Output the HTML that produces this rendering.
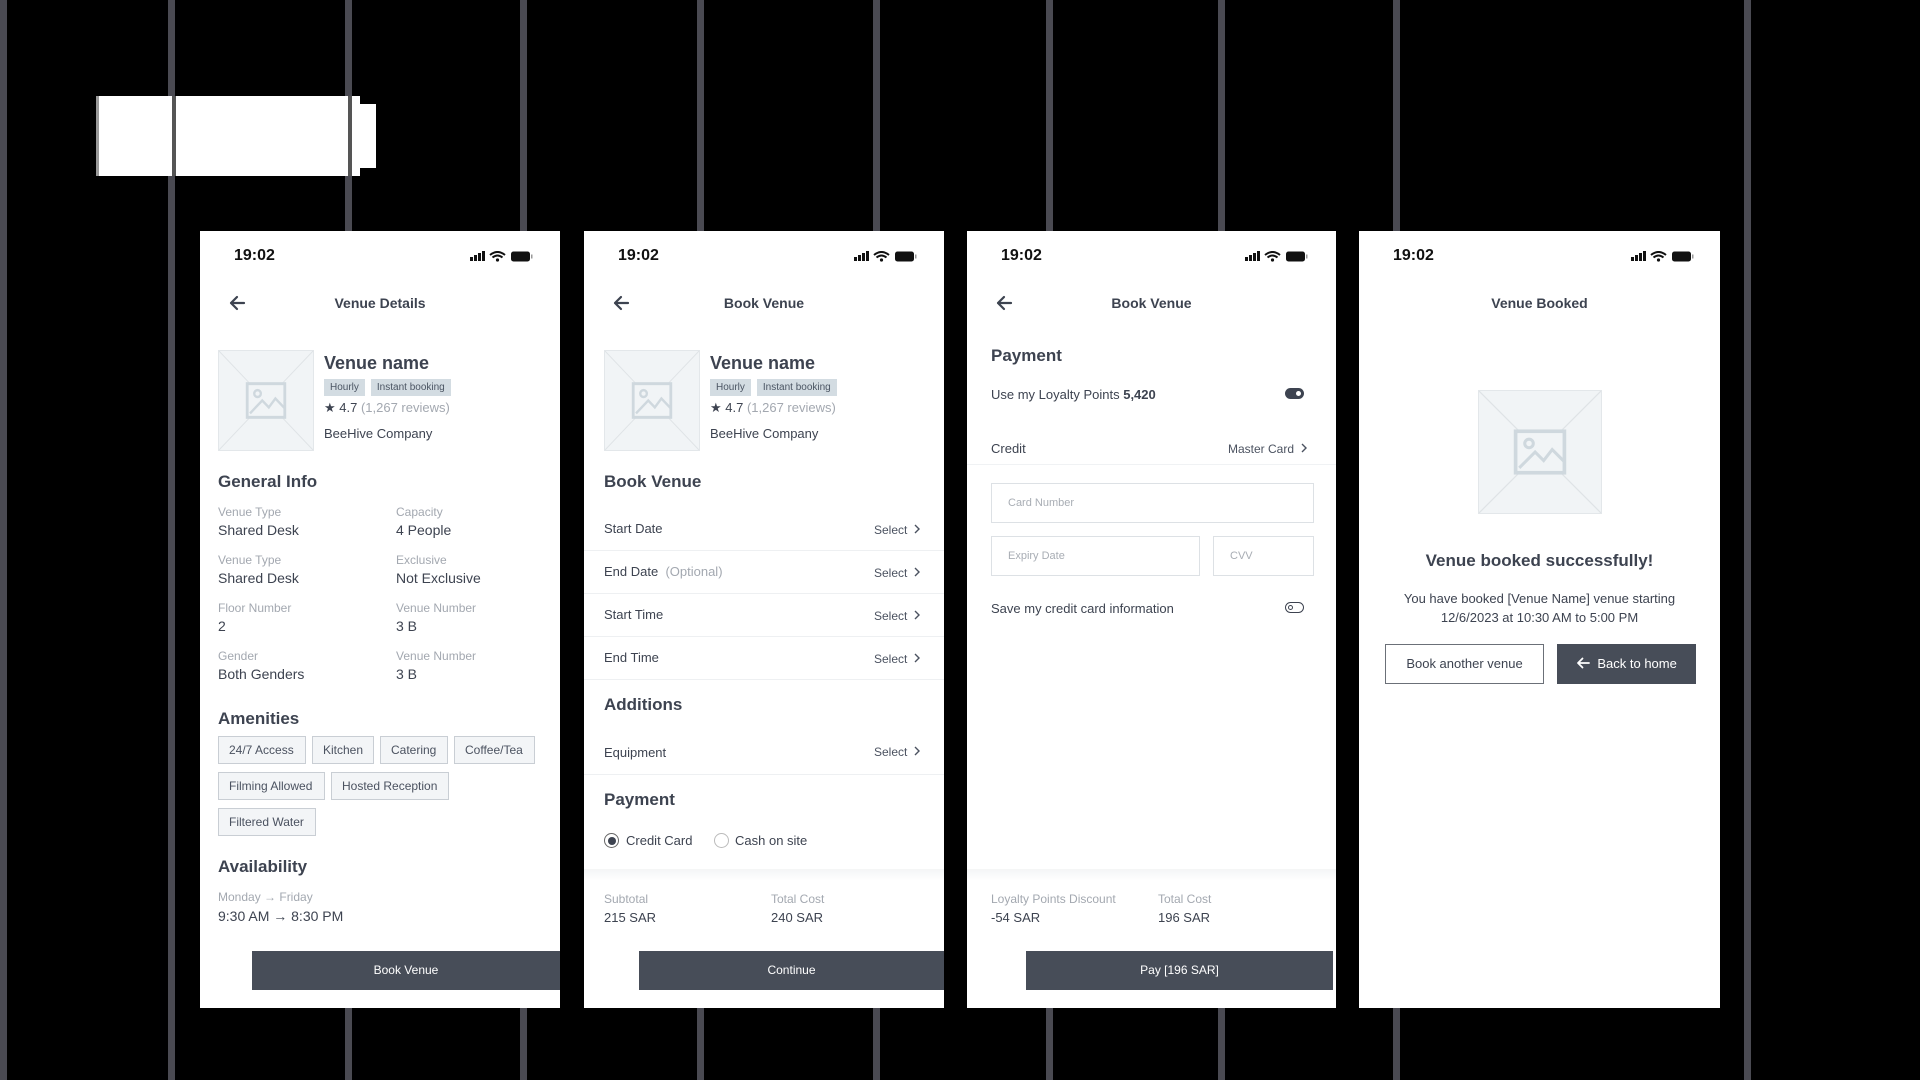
<!DOCTYPE html>
<html><head><meta charset="utf-8"><style>
*{margin:0;padding:0;box-sizing:border-box}
body{width:1920px;height:1080px;background:#000;position:relative;overflow:hidden;font-family:"Liberation Sans",sans-serif;color:#3d4350}
.vl{position:absolute;top:0;width:7px;height:1080px;background:#4a4a52}
.ph{position:absolute;top:231px;height:777px;background:#fff;overflow:hidden}
.a{position:absolute;white-space:nowrap}
.time{font-size:16px;font-weight:bold;color:#111;left:34px;top:16px}
.title{font-size:14px;font-weight:bold;top:64px;left:0;right:0;text-align:center;color:#3d4350}
.back{left:28px;top:63px}
.img{position:absolute;background:#f1f4f6;border:1px solid #e3e7ea}
.vn{font-size:18px;font-weight:bold}
.tag{font-size:10px;background:#d3dce2;color:#4b5563;padding:3px 6px;display:inline-block;margin-right:6px}
.h{font-size:17px;font-weight:bold;color:#3d4350}
.lb{font-size:12px;color:#a3a8b0}
.v{font-size:14px;color:#3d4350}
.chip{position:absolute;font-size:12px;border:1px solid #c9ced4;background:#f3f5f7;height:28px;line-height:26px;padding:0 10px;color:#4b5260}
.row{position:absolute;left:0;right:0;height:43px;border-bottom:1px solid #eef0f2}
.sel{font-size:12px;color:#4b5260}
.btn{position:absolute;background:#474d58;color:#fff;font-size:12px;text-align:center;line-height:39px;height:39px}
.foot{position:absolute;left:0;right:0;height:12px;background:linear-gradient(#f4f5f6,#fff)}
.inp{position:absolute;border:1px solid #dde1e5;font-size:11px;color:#a8adb4;padding-left:16px;line-height:38px;height:40px}
</style></head><body>
<div class="vl" style="left:0"></div>
<div class="vl" style="left:168px"></div>
<div class="vl" style="left:345px"></div>
<div class="vl" style="left:520px"></div>
<div class="vl" style="left:697px"></div>
<div class="vl" style="left:873px"></div>
<div class="vl" style="left:1046px"></div>
<div class="vl" style="left:1218px"></div>
<div class="vl" style="left:1393px"></div>
<div class="vl" style="left:1744px"></div>
<div style="position:absolute;left:96px;top:96px;width:264px;height:80px;background:#fff;border-left:3px solid #999"></div>
<div style="position:absolute;left:350px;top:104px;width:26px;height:64px;background:#fff"></div>
<div class="vl" style="left:172px;top:96px;height:80px;width:4px;background:#555"></div>
<div class="vl" style="left:348px;top:96px;height:80px;width:4px;background:#555"></div>

<svg width="0" height="0" style="position:absolute"><defs>
<g id="st"><rect x="0" y="6" width="3" height="4" fill="#111"/><rect x="4" y="4" width="3" height="6" fill="#111"/><rect x="8" y="2" width="3" height="8" fill="#111"/><rect x="12" y="0" width="3" height="10" fill="#111"/>
<path d="M20 4 Q27.5 -2 35 4 M22.5 6.5 Q27.5 2.5 32.5 6.5" stroke="#111" stroke-width="2" fill="none"/><circle cx="27.5" cy="9" r="1.6" fill="#111"/>
<rect x="41" y="0.5" width="19" height="10" rx="2.5" fill="#111"/><rect x="61" y="3.5" width="1.5" height="4" fill="#999"/></g>
<g id="ar"><path d="M16 9H3M9 3L3 9l6 6" stroke="#3d4350" stroke-width="2.2" fill="none" stroke-linecap="round" stroke-linejoin="round"/></g>
<g id="ph"><line x1="0" y1="0" x2="100" y2="100" stroke="#dfe3e6" stroke-width="1"/><line x1="100" y1="0" x2="0" y2="100" stroke="#dfe3e6" stroke-width="1"/><rect x="30" y="33" width="40" height="34" fill="#f1f4f6" stroke="#cfd8de" stroke-width="3"/><circle cx="41" cy="43" r="3.5" fill="none" stroke="#cfd8de" stroke-width="2.5"/><path d="M33 63l13-13 7 7 7-9 10 10" fill="none" stroke="#cfd8de" stroke-width="2.5"/></g>
<g id="chev"><path d="M1 1l4 4-4 4" stroke="#4b5260" stroke-width="1.4" fill="none"/></g>
</defs></svg>

<!-- PHONE 1 -->
<div class="ph" style="left:200px;width:360px">
<div class="a time">19:02</div>
<svg class="a" style="left:270px;top:20px" width="64" height="12"><use href="#st"/></svg>
<svg class="a back" width="20" height="18"><use href="#ar"/></svg>
<div class="a title">Venue Details</div>
<div class="img" style="left:18px;top:119px;width:96px;height:101px"><svg width="94" height="99" viewBox="0 0 100 100" preserveAspectRatio="none"><use href="#ph"/></svg></div>
<div class="a vn" style="left:124px;top:122px">Venue name</div>
<div class="a" style="left:124px;top:146px"><span class="tag">Hourly</span><span class="tag">Instant booking</span></div>
<div class="a" style="left:124px;top:169px;font-size:13px">★ 4.7 <span style="color:#a3a8b0">(1,267 reviews)</span></div>
<div class="a v" style="left:124px;top:195px;font-size:13px">BeeHive Company</div>
<div class="a h" style="left:18px;top:241px">General Info</div>
<div class="a lb" style="left:18px;top:274px">Venue Type</div><div class="a v" style="left:18px;top:291px">Shared Desk</div>
<div class="a lb" style="left:196px;top:274px">Capacity</div><div class="a v" style="left:196px;top:291px">4 People</div>
<div class="a lb" style="left:18px;top:322px">Venue Type</div><div class="a v" style="left:18px;top:339px">Shared Desk</div>
<div class="a lb" style="left:196px;top:322px">Exclusive</div><div class="a v" style="left:196px;top:339px">Not Exclusive</div>
<div class="a lb" style="left:18px;top:370px">Floor Number</div><div class="a v" style="left:18px;top:387px">2</div>
<div class="a lb" style="left:196px;top:370px">Venue Number</div><div class="a v" style="left:196px;top:387px">3 B</div>
<div class="a lb" style="left:18px;top:418px">Gender</div><div class="a v" style="left:18px;top:435px">Both Genders</div>
<div class="a lb" style="left:196px;top:418px">Venue Number</div><div class="a v" style="left:196px;top:435px">3 B</div>
<div class="a h" style="left:18px;top:478px">Amenities</div>
<div class="chip" style="left:18px;top:505px;width:88px">24/7 Access</div>
<div class="chip" style="left:112px;top:505px;width:62px">Kitchen</div>
<div class="chip" style="left:180px;top:505px;width:68px">Catering</div>
<div class="chip" style="left:254px;top:505px;width:81px">Coffee/Tea</div>
<div class="chip" style="left:18px;top:541px;width:107px">Filming Allowed</div>
<div class="chip" style="left:131px;top:541px;width:118px">Hosted Reception</div>
<div class="chip" style="left:18px;top:577px;width:98px">Filtered Water</div>
<div class="a h" style="left:18px;top:626px">Availability</div>
<div class="a lb" style="left:18px;top:659px">Monday → Friday</div>
<div class="a v" style="left:18px;top:677px">9:30 AM → 8:30 PM</div>
<div class="btn" style="left:52px;top:720px;width:308px">Book Venue</div>
</div>

<!-- PHONE 2 -->
<div class="ph" style="left:584px;width:360px">
<div class="a time">19:02</div>
<svg class="a" style="left:270px;top:20px" width="64" height="12"><use href="#st"/></svg>
<svg class="a back" width="20" height="18"><use href="#ar"/></svg>
<div class="a title">Book Venue</div>
<div class="img" style="left:20px;top:119px;width:96px;height:101px"><svg width="94" height="99" viewBox="0 0 100 100" preserveAspectRatio="none"><use href="#ph"/></svg></div>
<div class="a vn" style="left:126px;top:122px">Venue name</div>
<div class="a" style="left:126px;top:146px"><span class="tag">Hourly</span><span class="tag">Instant booking</span></div>
<div class="a" style="left:126px;top:169px;font-size:13px">★ 4.7 <span style="color:#a3a8b0">(1,267 reviews)</span></div>
<div class="a v" style="left:126px;top:195px;font-size:13px">BeeHive Company</div>
<div class="a h" style="left:20px;top:241px">Book Venue</div>
<div class="row" style="top:277px"></div><div class="row" style="top:320px"></div><div class="row" style="top:363px"></div><div class="row" style="top:406px"></div><div class="row" style="top:501px"></div>
<div class="a v" style="left:20px;top:290px;font-size:13px">Start Date</div>
<div class="a v" style="left:20px;top:333px;font-size:13px">End Date <span style="color:#a3a8b0">&nbsp;(Optional)</span></div>
<div class="a v" style="left:20px;top:376px;font-size:13px">Start Time</div>
<div class="a v" style="left:20px;top:419px;font-size:13px">End Time</div>
<div class="a h" style="left:20px;top:464px">Additions</div>
<div class="a v" style="left:20px;top:514px;font-size:13px">Equipment</div>
<div class="a sel" style="left:290px;top:292px">Select &nbsp;<svg width="6" height="10"><use href="#chev"/></svg></div>
<div class="a sel" style="left:290px;top:335px">Select &nbsp;<svg width="6" height="10"><use href="#chev"/></svg></div>
<div class="a sel" style="left:290px;top:378px">Select &nbsp;<svg width="6" height="10"><use href="#chev"/></svg></div>
<div class="a sel" style="left:290px;top:421px">Select &nbsp;<svg width="6" height="10"><use href="#chev"/></svg></div>
<div class="a sel" style="left:290px;top:514px">Select &nbsp;<svg width="6" height="10"><use href="#chev"/></svg></div>
<div class="a h" style="left:20px;top:559px">Payment</div>
<div class="a" style="left:20px;top:602px;width:15px;height:15px;border:1px solid #666;border-radius:50%"><div style="margin:2.5px;width:8px;height:8px;border-radius:50%;background:#3d4350"></div></div>
<div class="a v" style="left:42px;top:602px;font-size:13px">Credit Card</div>
<div class="a" style="left:130px;top:602px;width:15px;height:15px;border:1px solid #bbb;border-radius:50%"></div>
<div class="a v" style="left:151px;top:602px;font-size:13px">Cash on site</div>
<div class="foot" style="top:638px"></div>
<div class="a lb" style="left:20px;top:661px">Subtotal</div><div class="a v" style="left:20px;top:679px;font-size:13px">215 SAR</div>
<div class="a lb" style="left:187px;top:661px">Total Cost</div><div class="a v" style="left:187px;top:679px;font-size:13px">240 SAR</div>
<div class="btn" style="left:55px;top:720px;width:305px">Continue</div>
</div>

<!-- PHONE 3 -->
<div class="ph" style="left:967px;width:369px">
<div class="a time">19:02</div>
<svg class="a" style="left:278px;top:20px" width="64" height="12"><use href="#st"/></svg>
<svg class="a back" width="20" height="18"><use href="#ar"/></svg>
<div class="a title">Book Venue</div>
<div class="a h" style="left:24px;top:115px">Payment</div>
<div class="a v" style="left:24px;top:156px;font-size:13px">Use my Loyalty Points <b>5,420</b></div>
<div class="a" style="left:318px;top:157px;width:19px;height:11px;border-radius:6px;background:#3d4350"><div style="position:absolute;right:3px;top:3px;width:5px;height:5px;border-radius:50%;background:#fff"></div></div>
<div class="a v" style="left:24px;top:210px;font-size:13px">Credit</div>
<div class="a sel" style="left:261px;top:211px">Master Card &nbsp;<svg width="6" height="10"><use href="#chev"/></svg></div>
<div class="a" style="left:0;right:0;top:233px;height:1px;background:#f0f2f4"></div>
<div class="inp" style="left:24px;top:252px;width:323px">Card Number</div>
<div class="inp" style="left:24px;top:305px;width:209px">Expiry Date</div>
<div class="inp" style="left:246px;top:305px;width:101px">CVV</div>
<div class="a v" style="left:24px;top:370px;font-size:13px">Save my credit card information</div>
<div class="a" style="left:318px;top:371px;width:19px;height:11px;border-radius:6px;border:1.5px solid #3d4350"><div style="position:absolute;left:2px;top:1.5px;width:5px;height:5px;border-radius:50%;border:1.3px solid #3d4350"></div></div>
<div class="foot" style="top:638px"></div>
<div class="a lb" style="left:24px;top:661px">Loyalty Points Discount</div><div class="a v" style="left:24px;top:679px;font-size:13px">-54 SAR</div>
<div class="a lb" style="left:191px;top:661px">Total Cost</div><div class="a v" style="left:191px;top:679px;font-size:13px">196 SAR</div>
<div class="btn" style="left:59px;top:720px;width:307px">Pay [196 SAR]</div>
</div>

<!-- PHONE 4 -->
<div class="ph" style="left:1359px;width:361px">
<div class="a time">19:02</div>
<svg class="a" style="left:272px;top:20px" width="64" height="12"><use href="#st"/></svg>
<div class="a title">Venue Booked</div>
<div class="img" style="left:119px;top:159px;width:124px;height:124px"><svg width="122" height="122" viewBox="0 0 100 100"><use href="#ph"/></svg></div>
<div class="a h" style="left:0;right:0;text-align:center;top:320px">Venue booked successfully!</div>
<div class="a v" style="left:0;right:0;text-align:center;top:358px;font-size:13px;line-height:19px;white-space:normal">You have booked [Venue Name] venue starting<br>12/6/2023 at 10:30 AM to 5:00 PM</div>
<div class="a" style="left:26px;top:413px;width:159px;height:40px;border:1px solid #6b7078;font-size:13px;text-align:center;line-height:38px">Book another venue</div>
<div class="btn" style="left:198px;top:413px;width:139px;height:40px;line-height:40px;font-size:13px"><svg width="14" height="12" style="vertical-align:-1px"><path d="M13 6H2M6.5 1.5L2 6l4.5 4.5" stroke="#fff" stroke-width="1.8" fill="none" stroke-linecap="round" stroke-linejoin="round"/></svg>&nbsp; Back to home</div>
</div>
</body></html>
